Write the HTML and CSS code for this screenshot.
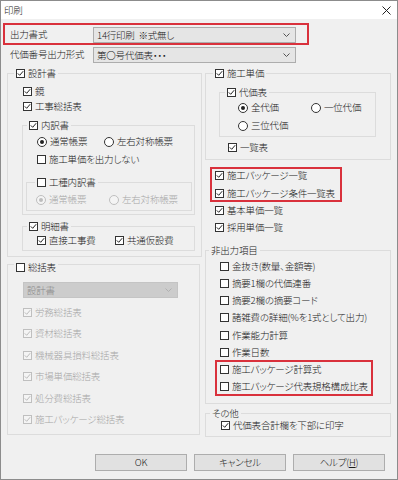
FILE: index.html
```html
<!DOCTYPE html>
<html lang="ja">
<head>
<meta charset="utf-8">
<title>印刷</title>
<link rel="stylesheet" href="styles.css">
</head>
<body>
<div class="window">
  <div class="titlebar">
    <span class="ttl">印刷</span>
    <svg class="close" width="9" height="9" viewBox="0 0 9 9"><path d="M0.5 0.5 L8.5 8.5 M8.5 0.5 L0.5 8.5" stroke="#222" stroke-width="1" fill="none"/></svg>
  </div>
  <div class="body">
    <div class="frow hl">
      <span class="flabel">出力書式</span>
      <div class="sel"><span>14行印刷&nbsp;&nbsp;※式無し</span><svg class="chev" width="7" height="4" viewBox="0 0 7 4"><path d="M0.5 0.5 L3.5 3.5 L6.5 0.5" stroke="#555" fill="none"/></svg></div>
    </div>
    <div class="frow">
      <span class="flabel">代価番号出力形式</span>
      <div class="sel"><span>第〇号代価表・・・</span><svg class="chev" width="7" height="4" viewBox="0 0 7 4"><path d="M0.5 0.5 L3.5 3.5 L6.5 0.5" stroke="#555" fill="none"/></svg></div>
    </div>

    <div class="cols">
      <div class="col col-l">
        <div class="grp g-sekkei">
          <div class="gt"><span class="cb on"><svg viewBox="0 0 7 7"><path d="M0.8 3.4 L2.7 5.3 L6.2 1.2"/></svg></span>設計書</div>
          <div class="ck p15"><span class="cb on"><svg viewBox="0 0 7 7"><path d="M0.8 3.4 L2.7 5.3 L6.2 1.2"/></svg></span>鏡</div>
          <div class="ck p15"><span class="cb on"><svg viewBox="0 0 7 7"><path d="M0.8 3.4 L2.7 5.3 L6.2 1.2"/></svg></span>工事総括表</div>

          <div class="grp g-uchi">
            <div class="gt"><span class="cb on"><svg viewBox="0 0 7 7"><path d="M0.8 3.4 L2.7 5.3 L6.2 1.2"/></svg></span>内訳書</div>
            <div class="ck p14">
              <span class="opt w64"><span class="rb on"></span>通常帳票</span>
              <span class="opt"><span class="rb"></span>左右対称帳票</span>
            </div>
            <div class="ck p14 mt3"><span class="cb"></span>施工単価を出力しない</div>
            <div class="grp g-koshu">
              <div class="gt"><span class="cb"></span>工種内訳書</div>
              <div class="ck p9 dis">
                <span class="opt w70"><span class="rb on"></span>通常帳票</span>
                <span class="opt"><span class="rb"></span>左右対称帳票</span>
              </div>
            </div>
          </div>

          <div class="grp g-meisai">
            <div class="gt"><span class="cb on"><svg viewBox="0 0 7 7"><path d="M0.8 3.4 L2.7 5.3 L6.2 1.2"/></svg></span>明細書</div>
            <div class="ck p14">
              <span class="opt w75"><span class="cb on"><svg viewBox="0 0 7 7"><path d="M0.8 3.4 L2.7 5.3 L6.2 1.2"/></svg></span>直接工事費</span>
              <span class="opt"><span class="cb on"><svg viewBox="0 0 7 7"><path d="M0.8 3.4 L2.7 5.3 L6.2 1.2"/></svg></span>共通仮設費</span>
            </div>
          </div>
        </div>

        <div class="grp g-sokatsu">
          <div class="gt"><span class="cb"></span>総括表</div>
          <div class="sel dsel"><span>設計書</span><svg class="chev" width="7" height="4" viewBox="0 0 7 4"><path d="M0.5 0.5 L3.5 3.5 L6.5 0.5" stroke="#b0b0b0" fill="none"/></svg></div>
          <div class="slist dis">
            <div class="ck"><span class="cb on"><svg viewBox="0 0 7 7"><path d="M0.8 3.4 L2.7 5.3 L6.2 1.2"/></svg></span>労務総括表</div>
            <div class="ck"><span class="cb on"><svg viewBox="0 0 7 7"><path d="M0.8 3.4 L2.7 5.3 L6.2 1.2"/></svg></span>資材総括表</div>
            <div class="ck"><span class="cb on"><svg viewBox="0 0 7 7"><path d="M0.8 3.4 L2.7 5.3 L6.2 1.2"/></svg></span>機械器具損料総括表</div>
            <div class="ck"><span class="cb on"><svg viewBox="0 0 7 7"><path d="M0.8 3.4 L2.7 5.3 L6.2 1.2"/></svg></span>市場単価総括表</div>
            <div class="ck"><span class="cb on"><svg viewBox="0 0 7 7"><path d="M0.8 3.4 L2.7 5.3 L6.2 1.2"/></svg></span>処分費総括表</div>
            <div class="ck"><span class="cb on"><svg viewBox="0 0 7 7"><path d="M0.8 3.4 L2.7 5.3 L6.2 1.2"/></svg></span>施工パッケージ総括表</div>
          </div>
        </div>
      </div>

      <div class="col col-r">
        <div class="grp g-tanka">
          <div class="gt"><span class="cb on"><svg viewBox="0 0 7 7"><path d="M0.8 3.4 L2.7 5.3 L6.2 1.2"/></svg></span>施工単価</div>
          <div class="grp g-daika">
            <div class="gt"><span class="cb on"><svg viewBox="0 0 7 7"><path d="M0.8 3.4 L2.7 5.3 L6.2 1.2"/></svg></span>代価表</div>
            <div class="ck p18">
              <span class="opt w70"><span class="rb on"></span>全代価</span>
              <span class="opt"><span class="rb"></span>一位代価</span>
            </div>
            <div class="ck p18 mt3"><span class="opt"><span class="rb"></span>三位代価</span></div>
          </div>
          <div class="ck p22 mt3"><span class="cb on"><svg viewBox="0 0 7 7"><path d="M0.8 3.4 L2.7 5.3 L6.2 1.2"/></svg></span>一覧表</div>
        </div>

        <div class="redbox rb1">
          <div class="ck"><span class="cb on"><svg viewBox="0 0 7 7"><path d="M0.8 3.4 L2.7 5.3 L6.2 1.2"/></svg></span>施工パッケージ一覧</div>
          <div class="ck"><span class="cb on"><svg viewBox="0 0 7 7"><path d="M0.8 3.4 L2.7 5.3 L6.2 1.2"/></svg></span>施工パッケージ条件一覧表</div>
        </div>
        <div class="stack">
          <div class="ck"><span class="cb on"><svg viewBox="0 0 7 7"><path d="M0.8 3.4 L2.7 5.3 L6.2 1.2"/></svg></span>基本単価一覧</div>
          <div class="ck"><span class="cb on"><svg viewBox="0 0 7 7"><path d="M0.8 3.4 L2.7 5.3 L6.2 1.2"/></svg></span>採用単価一覧</div>
        </div>

        <div class="grp g-hi">
          <div class="gt">非出力項目</div>
          <div class="hlist">
            <div class="ck"><span class="cb"></span>金抜き(数量、金額等)</div>
            <div class="ck"><span class="cb"></span>摘要1欄の代価連番</div>
            <div class="ck"><span class="cb"></span>摘要2欄の摘要コード</div>
            <div class="ck"><span class="cb"></span>諸雑費の詳細(%を1式として出力)</div>
            <div class="ck"><span class="cb"></span>作業能力計算</div>
            <div class="ck"><span class="cb"></span>作業日数</div>
            <div class="redbox rb2">
              <div class="ck"><span class="cb"></span>施工パッケージ計算式</div>
              <div class="ck"><span class="cb"></span>施工パッケージ代表規格構成比表</div>
            </div>
          </div>
        </div>

        <div class="grp g-other">
          <div class="gt">その他</div>
          <div class="ck p15"><span class="cb on"><svg viewBox="0 0 7 7"><path d="M0.8 3.4 L2.7 5.3 L6.2 1.2"/></svg></span>代価表合計欄を下部に印字</div>
        </div>
      </div>
    </div>

    <div class="btns">
      <div class="btn">OK</div>
      <div class="btn">キャンセル</div>
      <div class="btn">ヘルプ(<u>H</u>)</div>
    </div>
  </div>
</div>
</body>
</html>
```

FILE: styles.css
```css
* { box-sizing: border-box; margin: 0; padding: 0; }
html, body { width: 398px; height: 480px; overflow: hidden; }
body {
  font-family: "Noto Sans CJK JP", "Noto Sans", sans-serif;
  font-size: 9.5px;
  font-weight: 300;
  letter-spacing: -0.2px;
  color: #1a1a1a;
  font-feature-settings: "palt" 1;
  background: #f0f0f0;
}
.window {
  width: 398px; height: 480px;
  border: 1px solid #8c8c8c;
  background: #f0f0f0;
  display: flex; flex-direction: column;
}
.titlebar {
  height: 18px; background: #fff;
  display: flex; align-items: center; justify-content: space-between;
  padding: 0 6px 0 3px;
}
.ttl { font-size: 9.5px; line-height: 12px; color: #222; }
.close { display: block; }
.body { flex: 1; display: flex; flex-direction: column; padding-top: 6px; }

.frow { display: flex; align-items: flex-start; height: 18px; margin-left: 4px; width: 302px; padding-left: 5px; }
.frow + .frow { margin-top: 2px; }
.hl { outline: 2px solid #d9313c; }
.flabel { width: 83px; line-height: 18px; white-space: nowrap; }
.sel {
  margin-top: 2px; width: 203px; height: 16px;
  border: 1px solid #adadad; background: #e5e5e5;
  display: flex; align-items: center; justify-content: space-between;
  padding: 0 5px 0 3px; line-height: 14px; white-space: nowrap;
}
.chev { display: block; }
.dsel { margin: 0 0 0 15px; width: 155px; background: #cccccc; border-color: #c4c4c4; color: #8a8a8a; }

.cols { display: flex; margin-top: 10px; padding-left: 6px; gap: 3px; }
.col-l { width: 195px; }
.col-r { width: 186px; }

.grp { border: 1px solid #dcdcdc; }
.gt {
  display: flex; align-items: center; gap: 3px;
  width: max-content; height: 12px; line-height: 12px;
  margin-top: -7px; padding: 0 2px; background: #f0f0f0;
  white-space: nowrap;
}
.ck { display: flex; align-items: center; gap: 3px; height: 15px; line-height: 15px; white-space: nowrap; }
.opt { display: flex; align-items: center; gap: 3px; }
.w64 { width: 64px; }
.w70 { width: 70px; }
.w75 { width: 75px; }
.p9 { padding-left: 9px; }
.p14 { padding-left: 14px; }
.p15 { padding-left: 15px; }
.p18 { padding-left: 18px; }
.p22 { padding-left: 22px; }
.mt3 { margin-top: 3px; }

.cb {
  flex: none; width: 9px; height: 9px;
  border: 1px solid #333; background: #fff;
  display: flex; align-items: center; justify-content: center;
}
.cb svg { width: 7px; height: 7px; display: block; }
.cb svg path { stroke: #222; stroke-width: 1; fill: none; }
.rb {
  flex: none; width: 10px; height: 10px; border-radius: 50%;
  border: 1px solid #333; background: #fff;
  display: flex; align-items: center; justify-content: center;
}
.rb.on::after { content: ""; width: 4px; height: 4px; border-radius: 50%; background: #222; }

.dis { color: #a6a6a6; }
.dis .cb, .dis .rb { border-color: #bfbfbf; background: #f4f4f4; }
.dis .cb svg path { stroke: #bbbbbb; }
.dis .rb.on::after { background: #bdbdbd; }

/* left column groups */
.g-sekkei { padding-bottom: 5px; }
.g-sekkei > .gt { margin-left: 6px; margin-bottom: 5px; }
.g-uchi { margin: 11px 6px 0 14px; padding-bottom: 3px; }
.g-uchi > .gt { margin-left: 4px; margin-bottom: 3px; }
.g-koshu { margin: 15px 2px 0 3px; padding-bottom: 3px; }
.g-koshu > .gt { margin-left: 8px; margin-bottom: 4px; }
.g-meisai { margin: 11px 6px 0 14px; padding-bottom: 2px; }
.g-meisai > .gt { margin-left: 4px; margin-bottom: 1px; }
.g-sokatsu { margin: 7px 2px 0 0; padding-bottom: 7px; }
.g-sokatsu > .gt { margin-top: -4px; margin-left: 6px; margin-bottom: 9px; }
.slist { display: flex; flex-direction: column; gap: 6.4px; margin-top: 7px; padding-left: 15px; }

/* right column groups */
.g-tanka { padding-bottom: 4px; }
.g-tanka > .gt { margin-left: 7px; }
.g-daika { margin: 13px 14px 0 13px; padding-bottom: 3px; }
.g-daika > .gt { margin-left: 5px; margin-bottom: 2px; }

.redbox { display: flex; flex-direction: column; }
.rb1 { margin: 8px 0 0 6px; width: 130px; padding-left: 4px; gap: 3px; outline: 2px solid #d9313c; outline-offset: -1px; }
.stack { display: flex; flex-direction: column; gap: 2px; margin-top: 2px; padding-left: 10px; }

.g-hi { margin-top: 15px; padding-bottom: 9px; }
.g-hi > .gt { margin-left: 3px; margin-bottom: 3px; }
.hlist { display: flex; flex-direction: column; gap: 2.14px; }
.hlist > .ck { padding-left: 14px; }
.rb2 { margin-left: 11px; width: 154px; padding-left: 3px; gap: 2.14px; outline: 2px solid #d9313c; }

.g-other { margin-top: 9px; padding-bottom: 3px; }
.g-other > .gt { margin-left: 4px; margin-bottom: -1px; }

.btns { display: flex; justify-content: flex-end; gap: 7px; margin-top: 17px; padding-right: 12px; }
.btn {
  width: 92px; height: 17px;
  border: 1px solid #adadad; background: #e1e1e1;
  display: flex; align-items: center; justify-content: center;
  line-height: 15px;
}
.btn u { text-decoration: underline; }
```
